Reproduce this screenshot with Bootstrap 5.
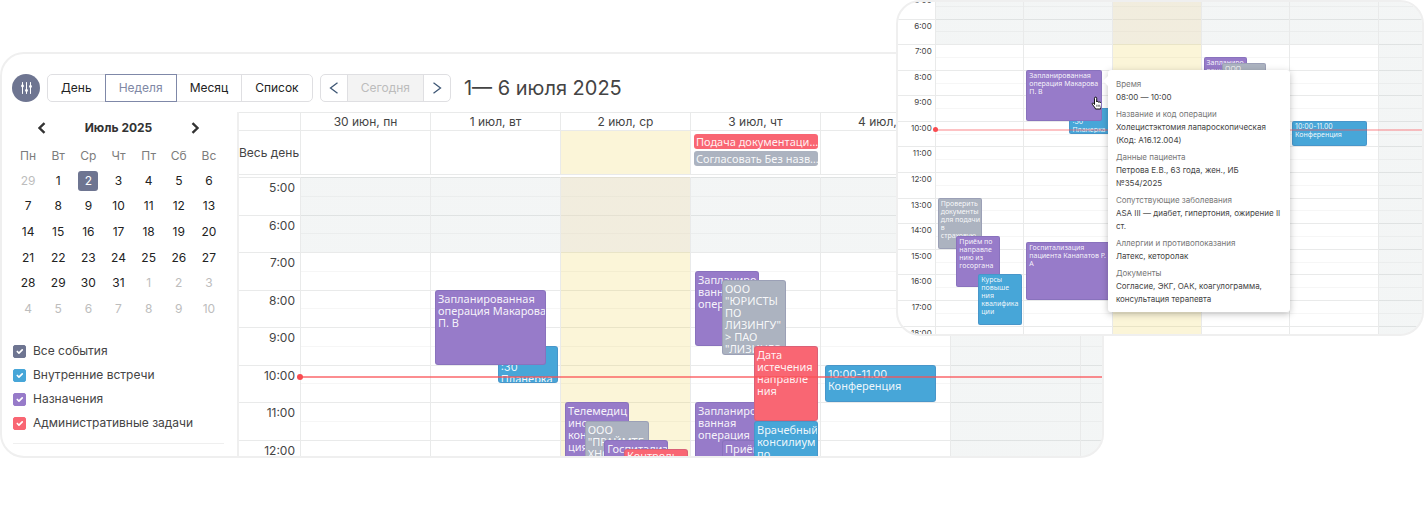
<!DOCTYPE html>
<html lang="ru">
<head>
<meta charset="utf-8">
<meta name="viewport" content="width=device-width, initial-scale=1">
<title>Календарь</title>
<link href="https://cdn.jsdelivr.net/npm/bootstrap@5.3.0/dist/css/bootstrap.min.css" rel="stylesheet">
<style>
  :root {
    --slate: #6e7591; --blue: #47a6d8; --violet: #977bc9; --red: #f96673; --grey: #acb3c0;
    --line: #e9eaea; --frame: #efefef;
    --off: rgba(140, 160, 160, .1); --today: rgba(235, 205, 60, .2);
  }
  body { font-family: Inter, "Noto Sans", sans-serif; font-size: 12px; line-height: 16px; color: #444; background: #fff; }
  .stage { padding-top: 52px; }
  .pane { background: #fff; border: 2px solid var(--frame); border-radius: 24px; overflow: hidden; }
  .pane-main { width: 77.5%; }
  .pane-detail { width: 37.1%; height: 336px; z-index: 20; }

  /* toolbar */
  .toolbar { padding: 20px 10px 10px; gap: 7px; }
  .btn-filter { width: 28px; height: 28px; background: var(--slate); }
  .toolbar .btn-group .btn { --bs-btn-font-size: 12px; --bs-btn-line-height: 18px; --bs-btn-padding-y: 4px; --bs-btn-padding-x: 13px;
    --bs-btn-border-color: #dfdfe2; --bs-btn-border-radius: 5px; --bs-btn-color: #222; }
  .toolbar .btn-group .btn.active { --bs-btn-active-border-color: #7f88a8; --bs-btn-active-color: #8088a5; --bs-btn-active-bg: #fff; }
  .toolbar .btn-group .btn-step { --bs-btn-padding-x: 8px; --bs-btn-color: #3f5876; display: flex; align-items: center; }
  .toolbar .btn-group .btn-now { --bs-btn-disabled-color: #bcbcbc; --bs-btn-disabled-bg: #f3f3f3; --bs-btn-disabled-border-color: #dfdfe2; --bs-btn-disabled-opacity: 1; }
  .period { font-size: 20px; line-height: 28px; font-weight: 400; margin-left: 6px; }

  /* sidebar */
  .side { width: 235px; padding: 0 13px 12px 11px; }
  .month-head { height: 31px; padding: 0 23px; color: #333; }
  .month-head h2 { font-size: 12px; line-height: 16px; font-weight: 700; }
  .month-days { width: 100%; height: 179px; table-layout: fixed; text-align: center; color: #222; }
  .month-days th { font-weight: 400; color: #7c7c7c; }
  .month-days th, .month-days td { height: 25px; padding: 0; vertical-align: middle; }
  .month-days .dim { color: #bdbdbd; }
  .month-days .picked { display: block; width: 20px; line-height: 20px; margin: 0 auto; border-radius: 3px; background: var(--slate); color: #fff; }
  .legend { padding: 17px 0 8px; border-bottom: 1px solid var(--frame); }
  .legend .form-check { min-height: 24px; padding-left: 0; margin: 0; gap: 7px; }
  .legend .form-check-input { width: 13px; height: 13px; margin: 0; border-radius: 2px; float: none; border-color: var(--tone); background-color: var(--tone); }
  .tone-slate { --tone: var(--slate); } .tone-blue { --tone: var(--blue); } .tone-violet { --tone: var(--violet); }
  .tone-red { --tone: var(--red); } .tone-grey { --tone: var(--grey); }

  /* week */
  .week { contain: size; border-left: 2px solid var(--frame); overflow: hidden; min-width: 0; }
  .week-cols { display: grid; grid-template-columns: 61px repeat(6, 6fr) 1fr; }
  .week-head { border-top: 1px solid var(--line); text-align: center; line-height: 18px; height: 18px; }
  .week-head > div, .week-allday > div { border-left: 1px solid var(--line); min-width: 0; white-space: nowrap; }
  .week-head > :first-child, .week-allday > :first-child { border-left: 0; }
  .week-allday { border-top: 1px solid var(--line); border-bottom: 1px solid var(--line); height: 45px; margin-bottom: 2px; }
  .week-allday .chips { padding: 3px 2px 0 3px; }
  .week-allday .chip { font: 11px/15px "Noto Sans", sans-serif; height: 15px; margin-bottom: 2px; padding-left: 2px; border-radius: 3px; background: var(--tone); color: rgba(255, 255, 255, .92); }
  .is-today { background-color: var(--today); }
  .day.is-today { --off: rgba(219, 218, 236, .3); }

  /* time grid: --n hours, starting at 5:00 */
  .time { position: relative; }
  .time-main { --n: 8; height: 300px; }
  .hours { grid-area: 1 / 1 / 2 / -1; display: flex; flex-direction: column; }
  .hours > div { flex: 1 1 0; border-top: 1px solid var(--line); background: linear-gradient(#f6f6f6, #f6f6f6) 61px 50% / 100% 1px no-repeat; }
  .hours span { display: block; width: 56px; text-align: right; line-height: 20px; }
  .day { grid-row: 1; position: relative; border-left: 1px solid var(--line); min-width: 0;
    background-image: linear-gradient(var(--off), var(--off)); background-repeat: no-repeat; background-size: 100% calc(200% / var(--n)); }
  .day-off { background-size: 100% 100%; }
  .lane { position: absolute; inset: 0 2px 0 4px; }
  .ev { position: absolute; top: calc(var(--s) / var(--n) * 100%); height: calc(var(--d) / var(--n) * 100%);
    left: calc(var(--x, 0) * 1%); width: calc(var(--w, 52) * 1%); overflow: hidden; white-space: nowrap;
    padding: 2px 0 0 2px; border-radius: 3px; background: var(--tone); color: rgba(255, 255, 255, .92);
    border: 1px solid rgba(80, 80, 140, .18); font: 11px/12px "Noto Sans", sans-serif; }
  .ev-tight { padding-top: 0; }
  .num { font-family: Inter, sans-serif; line-height: 0; }
  .now { position: absolute; left: 61px; right: 0; top: calc(5.3 / var(--n) * 100%); height: 2px; background: rgba(250, 80, 85, .65); z-index: 5; }
  .now::before { content: ""; position: absolute; left: -3px; top: -2px; width: 6px; height: 6px; border-radius: 50%; background: #f94b50; }

  /* enlarged fragment */
  .time-detail { --n: 14; height: 358px; margin-top: -9px; grid-template-columns: 37px repeat(5, 4fr) 2fr; font-size: 8px; }
  .time-detail .hours > div { background-position: 37px 50%; }
  .time-detail .hours span { width: 34px; line-height: 13px; }
  .time-detail .lane { inset: 0 1px 0 2px; }
  .time-detail .ev { font-size: 7px; line-height: 8px; padding: 1px 0 0 2px; border-radius: 2px; }
  .time-detail .now { left: 37px; background: rgba(250, 80, 85, .35); }
  .time-detail .now::before { left: -2px; width: 5px; height: 5px; }
  .hand { position: absolute; right: -1px; bottom: 10px; }
  .tip { position: absolute; z-index: 10; left: calc(100% - 4px); top: calc(3 / var(--n) * 100%); width: 182px; padding: 8px 5px 6px 8px;
    background: #fff; border-radius: 3px; box-shadow: 0 2px 7px rgba(0, 0, 0, .25); font-size: 8px; line-height: 13px; color: #444; }
  .tip::before { content: ""; position: absolute; left: -5px; top: 6px; border: solid transparent; border-width: 5px 5px 5px 0; border-right-color: #fff; }
  .tip dl { margin: 0; }
  .tip dt { font-weight: 400; color: #777; }
  .tip dd { margin: 0 0 4px; }
</style>
</head>
<body>
<main class="stage position-relative">

  <section class="pane pane-main" aria-label="Неделя">
    <header class="toolbar d-flex align-items-center">
      <button type="button" class="btn btn-filter rounded-circle p-0 border-0 d-flex align-items-center justify-content-center" aria-label="Фильтры">
        <svg width="11" height="12" viewBox="0 0 11 12" fill="none" stroke="#fff" stroke-width="1" stroke-linecap="round"><path d="M1.5.5v11M5.5.5v11M9.5.5v11"/><g fill="#fff" stroke="none"><circle cx="1.5" cy="4" r="1.4"/><circle cx="5.5" cy="8.5" r="1.4"/><circle cx="9.5" cy="4.5" r="1.4"/></g></svg>
      </button>
      <div class="btn-group" role="group" aria-label="Вид">
        <button type="button" class="btn">День</button>
        <button type="button" class="btn active">Неделя</button>
        <button type="button" class="btn">Месяц</button>
        <button type="button" class="btn">Список</button>
      </div>
      <div class="btn-group" role="group" aria-label="Период">
        <button type="button" class="btn btn-step" aria-label="Назад"><svg width="10" height="12" viewBox="0 0 10 12" fill="none" stroke="currentColor" stroke-width="1.3"><path d="M8.5.8 1.500 6l7 5.200"/></svg></button>
        <button type="button" class="btn btn-now" disabled>Сегодня</button>
        <button type="button" class="btn btn-step" aria-label="Вперёд"><svg width="10" height="12" viewBox="0 0 10 12" fill="none" stroke="currentColor" stroke-width="1.3"><path d="m1.5.8 7 5.200-7 5.200"/></svg></button>
      </div>
      <h1 class="period mb-0">1— 6 июля 2025</h1>
    </header>

    <div class="d-flex">
      <aside class="side flex-shrink-0">
        <div class="month-head d-flex align-items-center justify-content-between">
          <button type="button" class="btn p-0 border-0 d-flex" aria-label="Предыдущий месяц"><svg width="12" height="12" viewBox="0 0 12 12" fill="none" stroke="#333" stroke-width="2.400"><path d="M8.500 1.200 3.500 6l5 4.800"/></svg></button>
          <h2 class="mb-0">Июль 2025</h2>
          <button type="button" class="btn p-0 border-0 d-flex" aria-label="Следующий месяц"><svg width="12" height="12" viewBox="0 0 12 12" fill="none" stroke="#333" stroke-width="2.400"><path d="m3.500 1.200 5 4.800-5 4.800"/></svg></button>
        </div>
        <table class="month-days">
          <thead><tr><th>Пн</th><th>Вт</th><th>Ср</th><th>Чт</th><th>Пт</th><th>Сб</th><th>Вс</th></tr></thead>
          <tbody>
            <tr><td class="dim">29</td><td>1</td><td><span class="picked">2</span></td><td>3</td><td>4</td><td>5</td><td>6</td></tr>
            <tr><td>7</td><td>8</td><td>9</td><td>10</td><td>11</td><td>12</td><td>13</td></tr>
            <tr><td>14</td><td>15</td><td>16</td><td>17</td><td>18</td><td>19</td><td>20</td></tr>
            <tr><td>21</td><td>22</td><td>23</td><td>24</td><td>25</td><td>26</td><td>27</td></tr>
            <tr><td>28</td><td>29</td><td>30</td><td>31</td><td class="dim">1</td><td class="dim">2</td><td class="dim">3</td></tr>
            <tr class="dim"><td>4</td><td>5</td><td>6</td><td>7</td><td>8</td><td>9</td><td>10</td></tr>
          </tbody>
        </table>
        <div class="legend">
          <div class="form-check d-flex align-items-center tone-slate"><input class="form-check-input" type="checkbox" id="c1" checked><label for="c1">Все события</label></div>
          <div class="form-check d-flex align-items-center tone-blue"><input class="form-check-input" type="checkbox" id="c2" checked><label for="c2">Внутренние встречи</label></div>
          <div class="form-check d-flex align-items-center tone-violet"><input class="form-check-input" type="checkbox" id="c3" checked><label for="c3">Назначения</label></div>
          <div class="form-check d-flex align-items-center tone-red"><input class="form-check-input" type="checkbox" id="c4" checked><label for="c4">Административные задачи</label></div>
        </div>
      </aside>

      <div class="week flex-grow-1">
        <div class="week-cols week-head">
          <div></div><div>30 июн, пн</div><div>1 июл, вт</div><div>2 июл, ср</div><div>3 июл, чт</div><div>4 июл, пт</div><div>5 июл, сб</div><div></div>
        </div>
        <div class="week-cols week-allday">
          <div class="d-flex align-items-center">Весь день</div><div></div><div></div><div class="is-today"></div>
          <div class="chips">
            <div class="chip tone-red overflow-hidden">Подача документаци…</div>
            <div class="chip tone-grey overflow-hidden">Согласовать Без назв…</div>
          </div>
          <div></div><div></div><div></div>
        </div>
        <div class="week-cols time time-main">
          <div class="hours">
            <div><span>5:00</span></div><div><span>6:00</span></div><div><span>7:00</span></div><div><span>8:00</span></div>
            <div><span>9:00</span></div><div><span>10:00</span></div><div><span>11:00</span></div><div><span>12:00</span></div>
          </div>
          <div class="day" style="grid-column:2"></div>
          <div class="day" style="grid-column:3"><div class="lane">
            <div class="ev tone-blue" style="--s:4.5;--d:1;--x:51;--w:49"><span class="num">09:30<br>:30</span><br>Планерка</div>
            <div class="ev tone-violet" style="--s:3;--d:2;--w:90">Запланированная<br>операция Макарова<br>П. В</div>
          </div></div>
          <div class="day is-today" style="grid-column:4"><div class="lane">
            <div class="ev tone-violet" style="--s:6;--d:2">Телемедиц<br>инская<br>консульта<br>ция</div>
            <div class="ev tone-grey" style="--s:6.5;--d:2;--x:16">ООО<br>"ПРАЙМТЕ<br>ХНО"</div>
            <div class="ev tone-violet" style="--s:7;--d:1;--x:32">Госпитализа</div>
            <div class="ev ev-tight tone-red" style="--s:7.25;--d:1;--x:48">Контроль</div>
          </div></div>
          <div class="day" style="grid-column:5"><div class="lane">
            <div class="ev tone-violet" style="--s:2.5;--d:2">Запланиро<br>ванная<br>операция</div>
            <div class="ev tone-grey" style="--s:2.75;--d:2;--x:22">ООО<br>"ЮРИСТЫ<br>ПО<br>ЛИЗИНГУ"<br>&gt; ПАО<br>"ЛИЗИНГО</div>
            <div class="ev tone-violet" style="--s:6;--d:2">Запланиро<br>ванная<br>операция</div>
            <div class="ev tone-violet" style="--s:7;--d:1;--x:22">Приём</div>
            <div class="ev tone-red" style="--s:4.5;--d:2;--x:48">Дата<br>истечения<br>направле<br>ния</div>
            <div class="ev tone-blue" style="--s:6.5;--d:2;--x:48">Врачебный<br>консилиум<br>по</div>
          </div></div>
          <div class="day" style="grid-column:6"><div class="lane">
            <div class="ev tone-blue" style="--s:5;--d:1;--w:90"><span class="num">10:00-11.00</span><br>Конференция</div>
          </div></div>
          <div class="day day-off" style="grid-column:7"></div>
          <div class="day day-off" style="grid-column:8"></div>
          <div class="now"></div>
        </div>
      </div>
    </div>
  </section>

  <section class="pane pane-detail position-absolute top-0 end-0" aria-label="Карточка события">
    <div class="week-cols time time-detail">
      <div class="hours">
        <div><span>5:00</span></div><div><span>6:00</span></div><div><span>7:00</span></div><div><span>8:00</span></div><div><span>9:00</span></div>
        <div><span>10:00</span></div><div><span>11:00</span></div><div><span>12:00</span></div><div><span>13:00</span></div><div><span>14:00</span></div>
        <div><span>15:00</span></div><div><span>16:00</span></div><div><span>17:00</span></div><div><span>18:00</span></div>
      </div>
      <div class="day" style="grid-column:2"><div class="lane">
        <div class="ev tone-grey" style="--s:8;--d:2">Проверить<br>документы<br>для подачи<br>в<br>страховую</div>
        <div class="ev tone-violet" style="--s:9.5;--d:2;--x:22">Приём по<br>направле<br>нию из<br>госоргана</div>
        <div class="ev tone-blue" style="--s:11;--d:2;--x:48">Курсы<br>повыше<br>ния<br>квалифика<br>ции</div>
      </div></div>
      <div class="day" style="grid-column:3"><div class="lane">
        <div class="ev tone-blue" style="--s:4.5;--d:1;--x:51;--w:49"><span class="num">09:30<br>:30</span><br>Планерка</div>
        <div class="ev tone-violet" style="--s:3;--d:2;--w:90">Запланированная<br>операция Макарова<br>П. В
          <svg class="hand" width="11" height="14" viewBox="0 0 22 28" fill="#fff" stroke="#111" stroke-width="2" stroke-linejoin="round"><path d="M7 17V4.500a2.200 2.200 0 0 1 4.400 0V12c.4-1.600 3.400-1.500 3.600.5.700-1.200 3-1 3.200.7 1-.8 2.800-.2 2.800 1.500V19c0 3-1.500 4-1.800 7H9c-.5-2.500-3-4.500-6.300-9.500-1.200-2 1-3.500 2.600-1.800z"/><path d="M11.500 17.500v4M14.500 17.500v4M17.500 17.500v4" stroke-width="1.200"/></svg>
        </div>
        <div class="ev tone-violet" style="--s:9.75;--d:2.25;--w:100">Госпитализация<br>пациента Канапатов Р.<br>А</div>
      </div>
        <div class="tip" role="tooltip">
          <dl>
            <dt>Время</dt><dd>08:00 — 10:00</dd>
            <dt>Название и код операции</dt><dd>Холецистэктомия лапароскопическая (Код: A16.12.004)</dd>
            <dt>Данные пациента</dt><dd>Петрова Е.В., 63 года, жен., ИБ №354/2025</dd>
            <dt>Сопутствующие заболевания</dt><dd>ASA III — диабет, гипертония, ожирение II ст.</dd>
            <dt>Аллергии и противопоказания</dt><dd>Латекс, кеторолак</dd>
            <dt>Документы</dt><dd class="mb-0">Согласие, ЭКГ, ОАК, коагулограмма, консультация терапевта</dd>
          </dl>
        </div>
      </div>
      <div class="day is-today" style="grid-column:4"></div>
      <div class="day" style="grid-column:5"><div class="lane">
        <div class="ev tone-violet" style="--s:2.5;--d:2">Запланиро<br>ванная</div>
        <div class="ev tone-grey" style="--s:2.75;--d:2;--x:22">ООО</div>
      </div></div>
      <div class="day" style="grid-column:6"><div class="lane">
        <div class="ev tone-blue" style="--s:5;--d:1;--w:88"><span class="num">10:00-11.00</span><br>Конференция</div>
      </div></div>
      <div class="day day-off" style="grid-column:7"></div>
      <div class="now"></div>
    </div>
  </section>

</main>
<script src="https://cdn.jsdelivr.net/npm/bootstrap@5.3.0/dist/js/bootstrap.bundle.min.js"></script>
</body>
</html>
